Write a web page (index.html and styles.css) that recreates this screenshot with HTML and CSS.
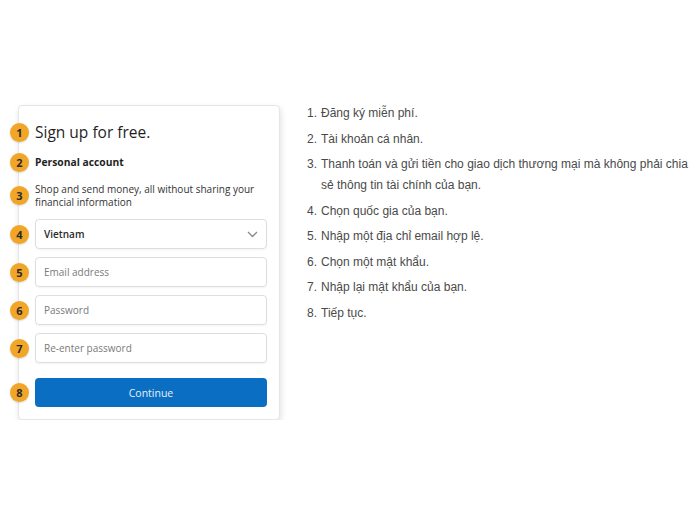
FILE: index.html
```html
<!DOCTYPE html>
<html lang="vi">
<head>
   <meta charset="UTF-8">
   <meta name="viewport" content="width=device-width, initial-scale=1.0">
   <title>Sign up</title>

   <link rel="stylesheet" href="styles.css">
</head>
<body>
   <main class="page">
      <div class="card">
        <div class="row row--title">
          <span class="badge">1</span>
          <h1>Sign up for free.</h1>
        </div>
        <div class="row row--account">
          <span class="badge">2</span>
          <h2>Personal account</h2>
        </div>
        <div class="row row--desc">
          <span class="badge">3</span>
          <p>Shop and send money, all without sharing your financial information</p>
        </div>
        <div class="row row--select">
          <span class="badge">4</span>
          <div class="field field--select">
            <span>Vietnam</span>
            <svg width="11" height="7" viewBox="0 0 11 7"><path d="M1 1l4.5 4.5L10 1" fill="none" stroke="#8a8a8a" stroke-width="1.3"/></svg>
          </div>
        </div>
        <div class="row row--input">
          <span class="badge">5</span>
          <div class="field">Email address</div>
        </div>
        <div class="row row--input">
          <span class="badge">6</span>
          <div class="field">Password</div>
        </div>
        <div class="row row--input">
          <span class="badge">7</span>
          <div class="field">Re-enter password</div>
        </div>
        <div class="row row--button">
          <span class="badge">8</span>
          <button class="btn">Continue</button>
        </div>
      </div>

      <ol class="steps">
        <li><span class="num">1.</span><span>Đăng ký miễn phí.</span></li>
        <li><span class="num">2.</span><span>Tài khoản cá nhân.</span></li>
        <li><span class="num">3.</span><span>Thanh toán và gửi tiền cho giao dịch thương mại mà không phải chia sẻ thông tin tài chính của bạn.</span></li>
        <li><span class="num">4.</span><span>Chọn quốc gia của bạn.</span></li>
        <li><span class="num">5.</span><span>Nhập một địa chỉ email hợp lệ.</span></li>
        <li><span class="num">6.</span><span>Chọn một mật khẩu.</span></li>
        <li><span class="num">7.</span><span>Nhập lại mật khẩu của bạn.</span></li>
        <li><span class="num">8.</span><span>Tiếp tục.</span></li>
      </ol>
   </main>
</body>
</html>
```

FILE: styles.css
```css
* {
  margin: 0;
  padding: 0;
  box-sizing: border-box;
}

body {
  background: #fff;
  font-family: "Open Sans", "Noto Sans", sans-serif;
  color: #222;
}

.page {
  display: flex;
  align-items: flex-start;
  padding: 105px 0 0 18px;
}

/* Card */

.card {
  width: 262px;
  height: 315px;
  padding: 16px 12px 0 16px;
  background: #fff;
  border: 1px solid #e6e6e6;
  border-radius: 4px;
  box-shadow: 1px 3px 6px rgba(0, 0, 0, 0.12);
}

.row {
  display: flex;
  align-items: center;
  gap: 6px;
  margin-left: -25px;
}

.badge {
  flex: none;
  width: 19px;
  height: 19px;
  border-radius: 50%;
  background: #f2a628;
  color: #2a2a2a;
  font-size: 11px;
  font-weight: 700;
  display: flex;
  align-items: center;
  justify-content: center;
  box-shadow: 0 1px 2px rgba(0, 0, 0, 0.15);
}

.row--title {
  height: 20px;
}

h1 {
  font-size: 15.5px;
  font-weight: 400;
  color: #1f1f1f;
}

.row--account {
  height: 20px;
  margin-top: 10px;
}

h2 {
  font-size: 10.3px;
  font-weight: 700;
  color: #1f1f1f;
}

.row--desc {
  height: 27px;
  margin-top: 10px;
}

.row--desc p {
  font-size: 10px;
  line-height: 13px;
  color: #333;
}

.row--select {
  margin-top: 10px;
}

.row--input {
  margin-top: 8px;
}

.field {
  flex: 1;
  height: 30px;
  padding: 0 8px;
  display: flex;
  align-items: center;
  border: 1px solid #dedede;
  border-radius: 4px;
  box-shadow: 0 1px 2px rgba(0, 0, 0, 0.05);
  font-size: 10px;
  color: #7a7a7a;
}

.field--select {
  justify-content: space-between;
  color: #2a2a2a;
  font-weight: 600;
}

.row--button {
  margin-top: 15px;
}

.btn {
  flex: 1;
  height: 29px;
  border: none;
  border-radius: 4px;
  background: #0a6fc2;
  color: #e6f0fa;
  font-family: inherit;
  font-size: 10.5px;
  font-weight: 500;
}

/* Steps */

.steps {
  list-style: none;
  margin: -2px 0 0 27px;
  font-family: "Liberation Sans", Arial, sans-serif;
  font-size: 12px;
  line-height: 21px;
  color: #4a4a4a;
  width: 385px;
}

.steps li {
  display: flex;
  margin-bottom: 4.5px;
}

.steps .num {
  flex: none;
  width: 14px;
}
```
